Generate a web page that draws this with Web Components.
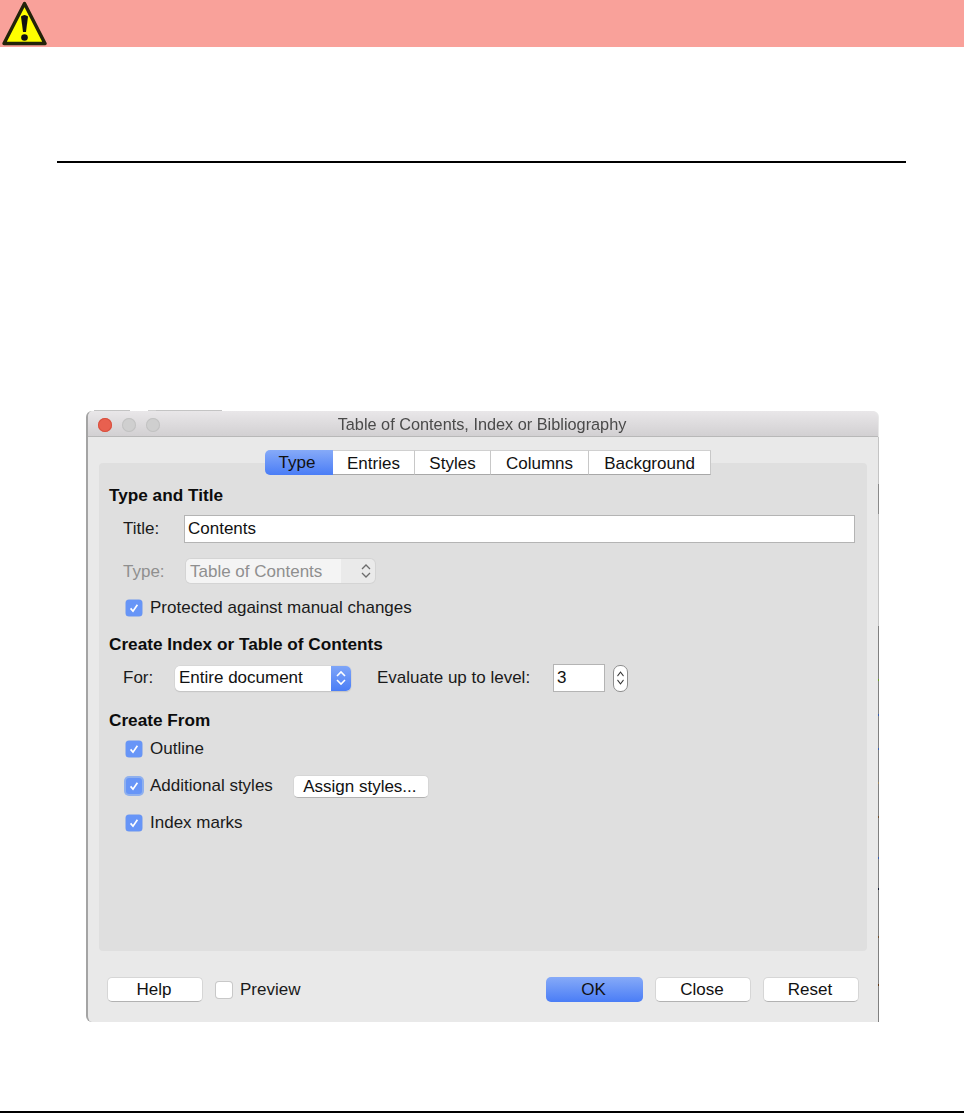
<!doctype html>
<html>
<head>
<meta charset="utf-8">
<title>Table of Contents dialog</title>
<style>
  html, body { margin: 0; background: #fff; }
  body { font-family: "Liberation Sans", Arial, sans-serif; height: 1113px; overflow: hidden; }
</style>
</head>
<body>
<doc-page></doc-page>

<script>
const CHECK = `<svg viewBox="0 0 16 16" width="16" height="16"><path d="M4.6 8.4 L7 11.2 L11.4 4.8" fill="none" stroke="#fff" stroke-width="1.7"/></svg>`

// chevron pair used on the popups and the spinner
const ARROWS = (c, w = 1.6, size = 12) => `<svg viewBox="0 0 12 20" width="${size}" height="20" preserveAspectRatio="none"><path d="M2 8 L6 4 L10 8 M2 12 L6 16 L10 12" fill="none" stroke="${c}" stroke-width="${w}"/></svg>`

customElements.define('warn-banner', class extends HTMLElement {
  constructor() {
    super()
    this.attachShadow({ mode: 'open' }).innerHTML = `
      <style>
        :host { display: block; height: 47px; background: #f9a19a; }
        svg { display: block; margin-left: 1px; filter: blur(.4px); }
      </style>
      <svg width="47" height="47" viewBox="0 0 47 47">
        <path d="M23.5 3.5 L44 43.5 L3 43.5 Z" fill="#ffff00" stroke="#23230a" stroke-width="3.4" stroke-linejoin="round"/>
        <path d="M20 16.5 Q23.5 13.5 27 16.5 L25 32 H22 Z" fill="#111"/>
        <circle cx="23.5" cy="37.5" r="3.3" fill="#111"/>
      </svg>`
  }
})

customElements.define('mac-button', class extends HTMLElement {
  constructor() {
    super()
    this.attachShadow({ mode: 'open' }).innerHTML = `
      <style>
        :host {
          display: flex; align-items: center; justify-content: center;
          box-sizing: border-box; width: 96px; height: 25px; padding: 1px 2px 0 0;
          background: #fff; border-radius: 5px; color: #111;
          border: 1px solid #d6d6d6; border-bottom-color: #b2b2b2;
          font-size: 17px;
        }
        :host([primary]) {
          width: 97px;
          background: linear-gradient(180deg, #86aaf8, #4a7df6);
          border: 0;
        }
      </style>
      <slot></slot>`
  }
})

customElements.define('mac-check', class extends HTMLElement {
  constructor() {
    super()
    const on = !this.hasAttribute('off')
    this.attachShadow({ mode: 'open' }).innerHTML = `
      <style>
        :host { display: flex; align-items: center; gap: 8px; font-size: 17px; color: #1a1a1a; }
        .box {
          width: 16px; height: 16px; border-radius: 3px; flex: none;
          background: #fff; box-shadow: 0 0 0 1px #c8c8c8;
        }
        .box.on { background: #6795f7; box-shadow: 0 0 0 .5px #6f98ee; }
        :host([focus]) .box { box-shadow: 0 0 0 2px #8fb0ee; }
        svg { display: block; }
      </style>
      <div class="box ${on ? 'on' : ''}">${on ? CHECK : ''}</div>
      <span><slot></slot></span>`
  }
})

customElements.define('mac-popup', class extends HTMLElement {
  constructor() {
    super()
    this.attachShadow({ mode: 'open' }).innerHTML = `
      <style>
        :host {
          display: flex; box-sizing: border-box; height: 25px;
          background: #fff; border-radius: 5px; overflow: hidden;
          box-shadow: 0 0 0 .5px #cfcfcf, 0 1px 1px #b8b8b8;
          font-size: 17px; color: #111;
        }
        .txt { flex: 1; padding-left: 4px; line-height: 24px; white-space: nowrap; }
        .btn {
          width: 20px; display: flex; align-items: center; justify-content: center;
          background: linear-gradient(180deg, #7ea5f8, #4a7df6);
        }
        svg { display: block; }
        :host([disabled]) { background: #eaeaea; color: #8f8f8f; box-shadow: 0 0 0 1px #d4d4d4; }
        :host([disabled]) .txt { background: #f4f4f4; flex: none; width: 155px; box-sizing: border-box; line-height: 26px; }
        :host([disabled]) .btn { background: none; flex: 1; justify-content: flex-end; padding-right: 3px; }
      </style>
      <div class="txt"><slot></slot></div>
      <div class="btn">${this.hasAttribute('disabled') ? ARROWS('#6c6c6c', 1.3) : ARROWS('#fff')}</div>`
  }
})

customElements.define('toc-tabs', class extends HTMLElement {
  constructor() {
    super()
    const tabs = [['Type', 68], ['Entries', 82], ['Styles', 76], ['Columns', 98], ['Background', 122]]
    this.attachShadow({ mode: 'open' }).innerHTML = `
      <style>
        :host { display: flex; font-size: 17px; color: #111; }
        .tab {
          box-sizing: border-box; height: 25px; background: #fff; text-align: center; line-height: 25px;
          border-top: 1px solid #d0d0d0; border-bottom: 1px solid #a8a8a8; border-right: 1px solid #c8c8c8;
        }
        .tab.on {
          background: linear-gradient(180deg, #86aaf8, #4a7df6);
          border: 0; border-radius: 5px 0 0 5px; line-height: 26px; padding-right: 4px;
        }
      </style>
      ${tabs.map(([t, w], i) => `<div class="tab ${i ? '' : 'on'}" style="width:${w}px">${t}</div>`).join('')}`
  }
})

customElements.define('toc-dialog', class extends HTMLElement {
  constructor() {
    super()
    this.attachShadow({ mode: 'open' }).innerHTML = `
      <style>
        :host {
          display: block; position: relative; box-sizing: border-box; width: 793px; height: 611px;
          background: #e9e9e9; border-radius: 6px 6px 0 6px;
          border-left: 2px solid #a4a4a4; padding-right: 1px;
          font-size: 17px; color: #1a1a1a;
          filter: blur(.35px);
        }
        /* what shows of the desktop behind the window, along its top and right edges */
        .behind-top {
          position: absolute; left: 6px; top: -1px; width: 128px; height: 1px;
          background: linear-gradient(90deg, #c4c4c4 0 36px, transparent 36px 54px, #d0d0d0 54px 62px, #c4c4c4 62px);
        }
        .behind-right {
          position: absolute; right: 0; top: 26px; bottom: 0; width: 1px;
          background: linear-gradient(180deg,
            #c4c4c4 0 47px, #8a8a8a 47px 77px, #c4c4c4 77px 189px, #808080 189px 242px,
            #6aa020 242px 244px, #808080 244px 277px, #3a5fb0 277px 279px, #808080 279px 311px,
            #3a5fb0 311px 313px, #808080 313px 345px, #a08860 345px 347px, #808080 347px 379px,
            #705030 379px 381px, #808080 381px 420px, #3a5fb0 420px 422px, #808080 422px 451px,
            #101830 451px 453px, #808080 453px 499px, #705030 499px 501px, #808080 501px 547px,
            #603818 547px 549px, #808080 549px);
        }
        .bar {
          position: relative; height: 26px; box-sizing: border-box; border-bottom: 1px solid #b8b8b8;
          background: linear-gradient(180deg, #e9e7e9, #d2d0d2); border-radius: 6px 6px 0 0;
          display: flex; align-items: center; justify-content: center; padding: 2px 2px 0 0;
          font-size: 16.3px; color: #4a4a4a;
        }
        .lights { position: absolute; left: 10px; top: 7px; display: flex; gap: 10px; }
        .lights i { width: 14px; height: 14px; border-radius: 50%; background: #cfcfcf; box-shadow: inset 0 0 0 1px #c2c2c2; }
        .lights i:first-child { background: #e8604f; box-shadow: inset 0 0 0 1px #d8503f; }
        .body { padding: 13px 11px 0; }
        toc-tabs { position: relative; margin: 0 0 -12px 166px; }
        .panel {
          box-sizing: border-box; height: 488px; background: #dfdfdf; border-radius: 4px;
          padding: 22px 12px 0 10px;
        }
        h3 { margin: 0; font-size: 17.2px; line-height: 20px; color: #0c0c0c; font-weight: bold; }
        .row { display: flex; align-items: center; }
        .indent { margin-left: 14px; }
        .muted { color: #8f8f8f; }
        .lbl { width: 61px; flex: none; }
        .input {
          box-sizing: border-box; background: #fff; border: 1px solid #b4b4b4; color: #111; line-height: 24px;
          padding-left: 3px;
        }
        .spin {
          width: 15px; height: 27px; box-sizing: border-box; border: 1px solid #8e8e8e; border-radius: 7px;
          background: #fff; display: flex; align-items: center; justify-content: center;
        }
        .spin svg { display: block; }
        .foot { display: flex; align-items: center; margin: 0 -11px; padding: 26px 19px 0; }
        .foot mac-check { margin-left: 13px; }
        .push { flex: 1; }
        .foot mac-button + mac-button { margin-left: 12px; }
      </style>
      <div class="behind-top"></div>
      <div class="behind-right"></div>
      <div class="bar">
        <div class="lights"><i></i><i></i><i></i></div>
        Table of Contents, Index or Bibliography
      </div>
      <div class="body">
        <toc-tabs></toc-tabs>
        <div class="panel">
          <h3>Type and Title</h3>
          <div class="row indent" style="margin-top:10px">
            <span class="lbl">Title:</span>
            <div class="input" style="width:671px;height:28px;line-height:25px">Contents</div>
          </div>
          <div class="row indent muted" style="margin-top:16px">
            <span class="lbl" style="width:63px;padding-top:1px">Type:</span>
            <mac-popup disabled style="width:189px;height:24px">Table of Contents</mac-popup>
          </div>
          <mac-check style="margin:16px 0 0 17px;height:17px">Protected against manual changes</mac-check>
          <h3 style="margin-top:18px">Create Index or Table of Contents</h3>
          <div class="row indent" style="margin-top:10px">
            <span class="lbl" style="width:52px">For:</span>
            <mac-popup style="width:176px">Entire document</mac-popup>
            <span style="margin-left:26px;width:176px">Evaluate up to level:</span>
            <div class="input" style="width:52px;height:28px;line-height:26px">3</div>
            <div class="spin" style="margin-left:8px">${ARROWS('#333', 1.2, 9)}</div>
          </div>
          <h3 style="margin-top:18px">Create From</h3>
          <mac-check style="margin:10px 0 0 17px;height:17px">Outline</mac-check>
          <div class="row" style="margin:17px 0 0 17px;height:24px">
            <mac-check focus>Additional styles</mac-check>
            <mac-button style="width:136px;height:23px;margin-left:20px">Assign styles...</mac-button>
          </div>
          <mac-check style="margin:16px 0 0 17px;height:17px">Index marks</mac-check>
        </div>
        <div class="foot">
          <mac-button>Help</mac-button>
          <mac-check off>Preview</mac-check>
          <div class="push"></div>
          <mac-button primary>OK</mac-button>
          <mac-button>Close</mac-button>
          <mac-button>Reset</mac-button>
        </div>
      </div>`
  }
})

customElements.define('doc-page', class extends HTMLElement {
  constructor() {
    super()
    this.attachShadow({ mode: 'open' }).innerHTML = `
      <style>
        :host { display: block; }
        .rule { height: 2px; background: #000; margin: 114px 58px 0 57px; }
        toc-dialog { margin: 248px 0 0 86px; }
        .foot-rule { height: 2px; background: #000; margin-top: 89px; }
      </style>
      <warn-banner></warn-banner>
      <div class="rule"></div>
      <toc-dialog></toc-dialog>
      <div class="foot-rule"></div>`
  }
})
</script>
</body>
</html>
